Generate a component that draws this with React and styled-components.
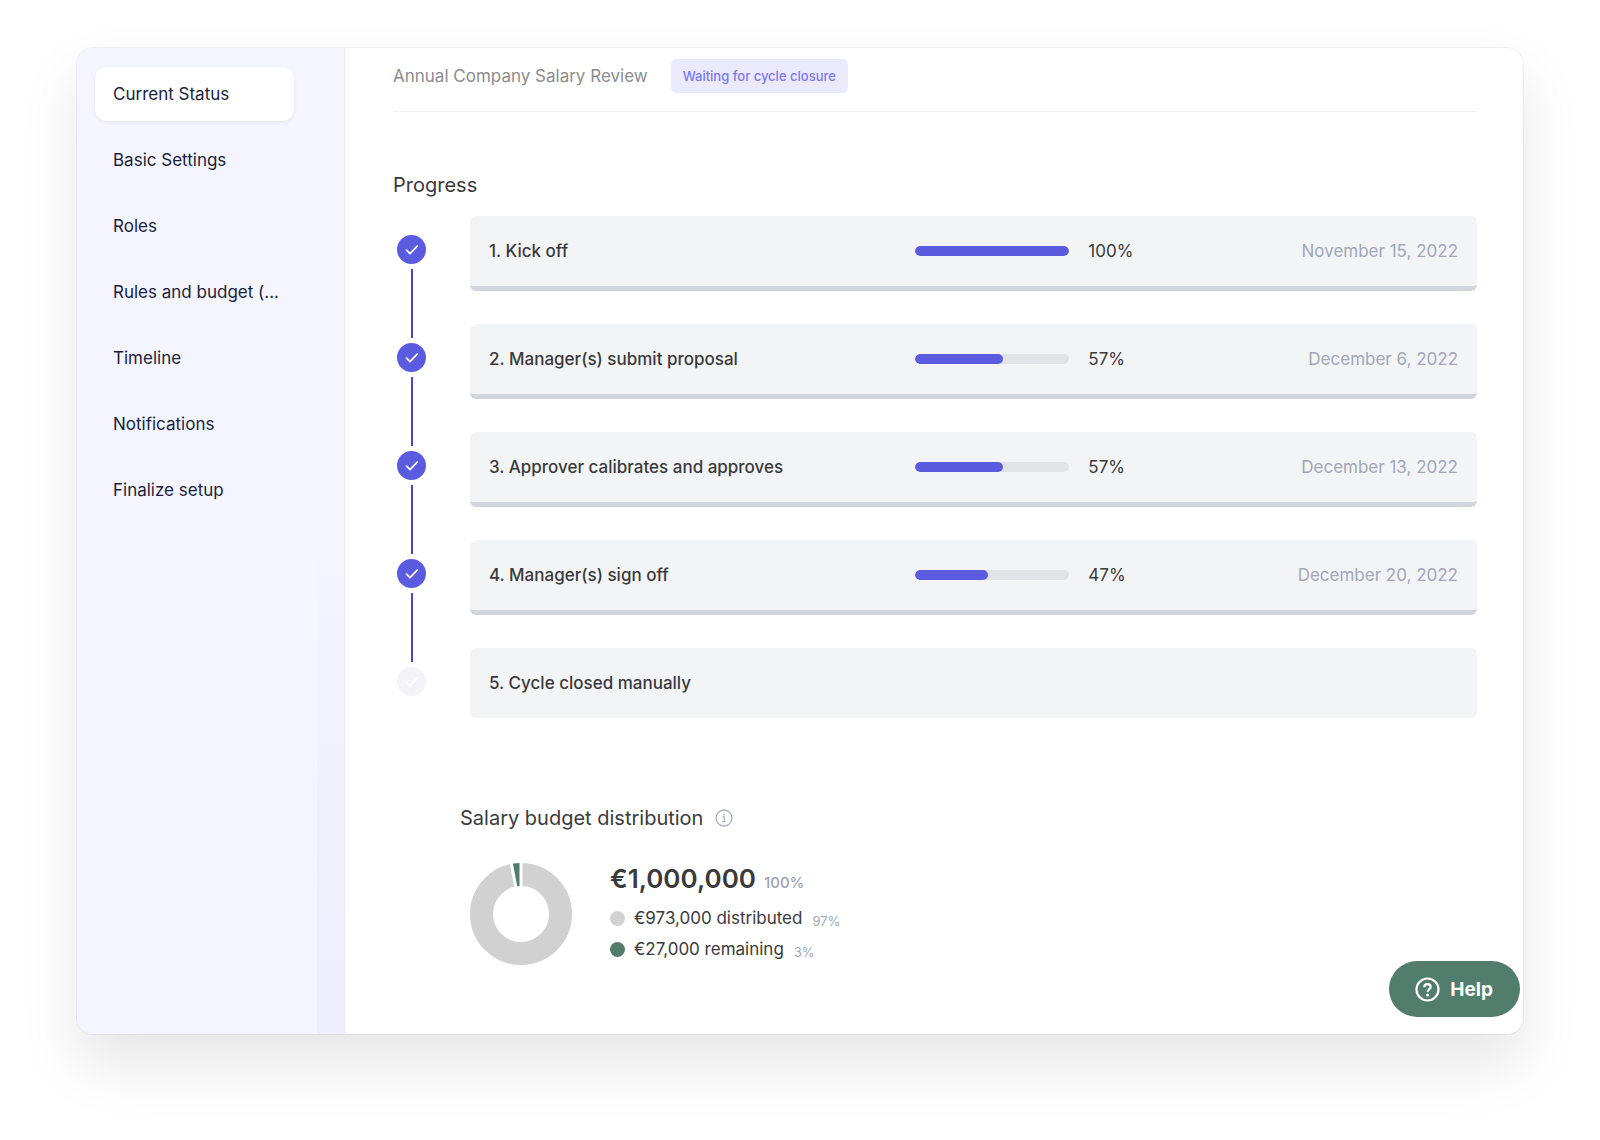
import React from 'react';
import styled, { createGlobalStyle } from 'styled-components';

const GlobalStyle = createGlobalStyle`
  * {
    box-sizing: border-box;
  }

  body {
    margin: 0;
    background: #fff;
    color: #3a3a3c;
    font-family: Inter, "Liberation Sans", sans-serif;
    font-size: 17px;
    line-height: 24px;
  }
`;

const Page = styled.div`
  padding: 48px 77px 106px;
`;

const Window = styled.div`
  position: relative;
  display: flex;
  min-height: calc(100vh - 154px);
  border-radius: 16px;
  overflow: hidden;
  background: #fff;
  box-shadow: 0 0 0 1px rgba(0, 0, 0, 0.05), 0 30px 60px rgba(0, 0, 0, 0.1);
`;

const Sidebar = styled.nav`
  flex: 0 0 268px;
  display: flex;
  flex-direction: column;
  align-items: flex-start;
  gap: 12px;
  padding: 19px 18px;
  border-right: 1px solid #ebebf7;
  background: linear-gradient(to bottom, rgba(238, 238, 252, 0) 48%, #eeeefc 95%) right / 27px 100% no-repeat #f5f5ff;
`;

const NavItem = styled.a`
  width: 199px;
  padding: 15px 12px 15px 18px;
  border-radius: 12px;
  overflow: hidden;
  white-space: nowrap;
  text-overflow: ellipsis;
  text-decoration: none;
  color: #1b1f3b;
  background: ${(props) => (props.$active ? '#fff' : 'transparent')};
  box-shadow: ${(props) => (props.$active ? '0 1px 4px rgba(60, 60, 120, 0.08)' : 'none')};
`;

const Main = styled.main`
  flex: 1;
  min-width: 0;
  padding: 11px 46px 48px 48px;
`;

const Header = styled.header`
  display: flex;
  align-items: center;
  gap: 23px;
  padding-bottom: 18px;
  border-bottom: 1px solid #f1f1f3;
`;

const CycleName = styled.h1`
  margin: 0;
  font-size: 17px;
  font-weight: 400;
  color: #8c8c8e;
`;

const StatusBadge = styled.span`
  padding: 5px 12px;
  border-radius: 5px;
  background: #ebeafd;
  color: #7b79ee;
  font-size: 13px;
  font-weight: 500;
`;

const SectionTitle = styled.h2`
  display: flex;
  align-items: center;
  gap: 12px;
  margin: 0;
  font-size: 20px;
  font-weight: 400;
  line-height: 28px;
`;

const ProgressSection = styled.section`
  padding-top: 59px;
`;

const Stepper = styled.div`
  display: flex;
  gap: 44px;
  margin-top: 17px;
  padding-left: 4px;
`;

const Markers = styled.div`
  display: flex;
  flex-direction: column;
  align-items: center;
  gap: 5px;
  padding-top: 19px;
`;

const Marker = styled.span`
  display: flex;
  align-items: center;
  justify-content: center;
  width: 29px;
  height: 29px;
  border-radius: 50%;
  background: ${(props) => (props.$done ? '#5b5be0' : '#f3f3f8')};
`;

const Connector = styled.span`
  width: 2px;
  height: 69px;
  background: #4643d8;
`;

const Steps = styled.ol`
  flex: 1;
  display: flex;
  flex-direction: column;
  gap: 33px;
  margin: 0;
  padding: 0;
  list-style: none;
`;

const Step = styled.li`
  display: flex;
  align-items: center;
  height: ${(props) => (props.$done ? 75 : 70)}px;
  padding: 0 19px;
  border-bottom: ${(props) => (props.$done ? '5px solid #d1d5dc' : 'none')};
  border-radius: 6px;
  background: #f3f4f6;
`;

const StepName = styled.span`
  flex: 0 0 44%;
  font-weight: 500;
`;

const Track = styled.div`
  width: 154px;
  height: 10px;
  margin-right: 19px;
  border-radius: 5px;
  overflow: hidden;
  background: #e2e3e6;
`;

const Fill = styled.div`
  height: 100%;
  border-radius: 5px;
  background: #5b5be0;
`;

const StepDate = styled.time`
  margin-left: auto;
  color: #a2a7b8;
`;

const BudgetSection = styled.section`
  padding: 86px 0 0 67px;
`;

const Budget = styled.div`
  display: flex;
  align-items: flex-start;
  gap: 38px;
  padding: 31px 0 0 10px;
`;

const Total = styled.p`
  display: flex;
  align-items: baseline;
  gap: 8px;
  margin: 0 0 7px;
  font-size: 26px;
  font-weight: 600;
  line-height: 32px;
`;

const TotalShare = styled.span`
  color: #9ba1b3;
  font-size: 15px;
  font-weight: 500;
`;

const Legend = styled.ul`
  display: flex;
  flex-direction: column;
  gap: 7px;
  margin: 0;
  padding: 0;
  list-style: none;
`;

const LegendItem = styled.li`
  display: flex;
  align-items: center;
`;

const Dot = styled.span`
  width: 15px;
  height: 15px;
  margin-right: 9px;
  border-radius: 50%;
  background: ${(props) => props.$color};
`;

const Share = styled.span`
  align-self: flex-end;
  margin-left: 10px;
  color: #a2a7b8;
  font-size: 13px;
  line-height: 18px;
`;

const HelpButton = styled.button`
  position: absolute;
  right: 3px;
  bottom: 17px;
  display: flex;
  align-items: center;
  gap: 10px;
  height: 56px;
  padding: 0 27px 0 26px;
  border: none;
  border-radius: 28px;
  background: #527d6c;
  color: #fff;
  font-family: inherit;
  font-size: 19px;
  font-weight: 700;
  cursor: pointer;
`;

const navItems = [
  'Current Status',
  'Basic Settings',
  'Roles',
  'Rules and budget (...',
  'Timeline',
  'Notifications',
  'Finalize setup',
];

const steps = [
  { name: '1. Kick off', percent: 100, date: 'November 15, 2022' },
  { name: '2. Manager(s) submit proposal', percent: 57, date: 'December 6, 2022' },
  { name: '3. Approver calibrates and approves', percent: 57, date: 'December 13, 2022' },
  { name: '4. Manager(s) sign off', percent: 47, date: 'December 20, 2022' },
  { name: '5. Cycle closed manually' },
];

const legend = [
  { label: '€973,000 distributed', share: '97%', color: '#d1d1d1' },
  { label: '€27,000 remaining', share: '3%', color: '#527d6c' },
];

const CheckIcon = () => (
  <svg width="14" height="12" viewBox="0 0 14 12" fill="none" aria-hidden="true">
    <path d="M1.5 6.2 5 9.7 12.3 2" stroke="#fff" strokeWidth="1.8" strokeLinecap="round" strokeLinejoin="round" />
  </svg>
);

const InfoIcon = () => (
  <svg width="18" height="18" viewBox="0 0 18 18" fill="none" stroke="#a9aec0" aria-hidden="true">
    <circle cx="9" cy="9" r="8" strokeWidth="1.3" />
    <path d="M7.4 7.9H9.2V12.6M7 12.7H11.2" strokeWidth="1.1" />
    <circle cx="9" cy="5.5" r="0.9" fill="#a9aec0" stroke="none" />
  </svg>
);

const HelpIcon = () => (
  <svg width="25" height="25" viewBox="0 0 25 25" fill="none" stroke="#fff" strokeWidth="2.2" aria-hidden="true">
    <circle cx="12.5" cy="12.5" r="11" />
    <path d="M9.3 10.2C9.3 8.2 10.7 7.2 12.5 7.2S15.7 8.3 15.7 10C15.7 12.1 12.6 12.3 12.6 14.8" />
    <circle cx="12.6" cy="17.9" r="1.5" fill="#fff" stroke="none" />
  </svg>
);

const Donut = () => (
  <svg width="102" height="102" viewBox="0 0 102 102" fill="none" role="img" aria-label="97% distributed, 3% remaining">
    <circle cx="51" cy="51" r="39.5" stroke="#d1d1d1" strokeWidth="23" />
    <circle
      cx="51"
      cy="51"
      r="39.5"
      stroke="#527d6c"
      strokeWidth="23"
      pathLength="100"
      strokeDasharray="3 97"
      transform="rotate(-100.8 51 51)"
    />
    <g stroke="#fff" strokeWidth="3">
      <path d="M51 26V-1" />
      <path d="M51 26V-1" transform="rotate(-10.8 51 51)" />
    </g>
  </svg>
);

const App = () => {
  return (
    <Page>
      <GlobalStyle />
      <Window>
        <Sidebar>
          {navItems.map((item, i) => (
            <NavItem href="#" key={item} $active={i === 0}>{item}</NavItem>
          ))}
        </Sidebar>
        <Main>
          <Header>
            <CycleName>Annual Company Salary Review</CycleName>
            <StatusBadge>Waiting for cycle closure</StatusBadge>
          </Header>
          <ProgressSection>
            <SectionTitle>Progress</SectionTitle>
            <Stepper>
              <Markers>
                {steps.map((step, i) => (
                  <React.Fragment key={step.name}>
                    {i > 0 && <Connector />}
                    <Marker $done={!!step.date}><CheckIcon /></Marker>
                  </React.Fragment>
                ))}
              </Markers>
              <Steps>
                {steps.map((step) => (
                  <Step key={step.name} $done={!!step.date}>
                    <StepName>{step.name}</StepName>
                    {step.date && (
                      <>
                        <Track role="progressbar" aria-valuenow={step.percent} aria-label={step.name}>
                          <Fill style={{ width: `${step.percent}%` }} />
                        </Track>
                        <span>{`${step.percent}%`}</span>
                        <StepDate>{step.date}</StepDate>
                      </>
                    )}
                  </Step>
                ))}
              </Steps>
            </Stepper>
          </ProgressSection>
          <BudgetSection>
            <SectionTitle>
              Salary budget distribution
              <InfoIcon />
            </SectionTitle>
            <Budget>
              <Donut />
              <div>
                <Total>
                  €1,000,000
                  <TotalShare>100%</TotalShare>
                </Total>
                <Legend>
                  {legend.map((entry) => (
                    <LegendItem key={entry.label}>
                      <Dot $color={entry.color} />
                      {entry.label}
                      <Share>{entry.share}</Share>
                    </LegendItem>
                  ))}
                </Legend>
              </div>
            </Budget>
          </BudgetSection>
        </Main>
        <HelpButton type="button">
          <HelpIcon />
          Help
        </HelpButton>
      </Window>
    </Page>
  );
};

export default App;
